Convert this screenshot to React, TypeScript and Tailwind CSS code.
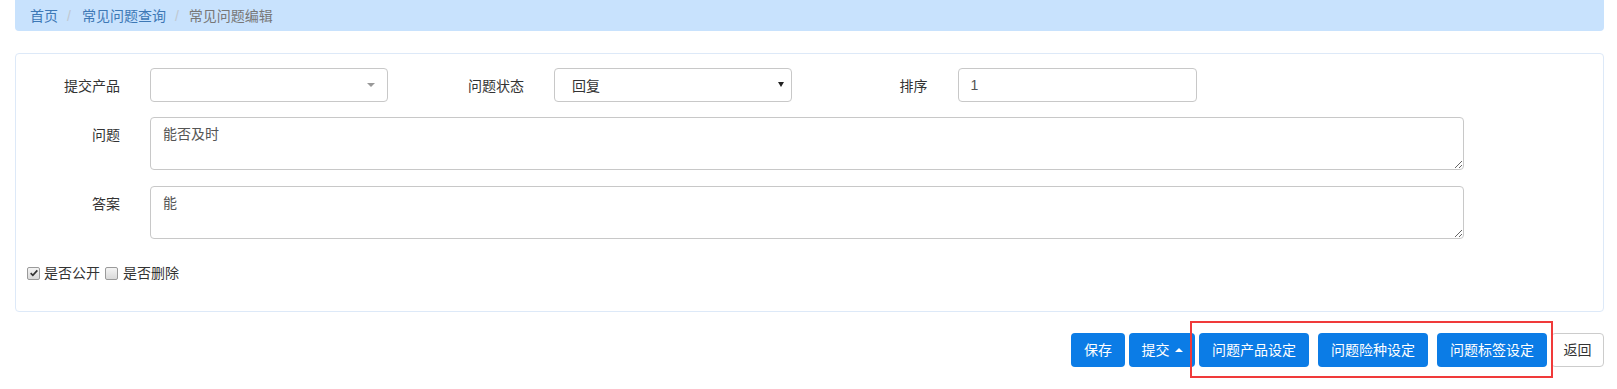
import React from "react";

const font = "font-['Liberation_Sans','Noto_Sans_CJK_SC',sans-serif]";

function Checkbox({ checked }: { checked?: boolean }) {
  return (
    <span className="flex h-[13px] w-[13px] items-center justify-center rounded-[2px] border border-[#9a9a9a] bg-gradient-to-b from-[#f4f4f4] to-[#dadada]">
      {checked && (
        <svg viewBox="0 0 12 12" className="h-[10px] w-[10px]">
          <path d="M2 6.2 L4.6 8.8 L10 2.8" fill="none" stroke="#333" strokeWidth="2" />
        </svg>
      )}
    </span>
  );
}

export default function App() {
  return (
    <div className={`h-[389px] w-full bg-white pl-[15px] pr-[13px] text-[14px] text-[#333] ${font}`}>
      {/* 面包屑 */}
      <div className="flex h-[31px] items-center rounded-b-[4px] bg-[#c8e2fd] pl-[15px] leading-[20px]">
        <span className="text-[#3d78b5]">首页</span>
        <span className="ml-[9px] mr-[11px] text-[#c0c8d0]">/</span>
        <span className="text-[#3d78b5]">常见问题查询</span>
        <span className="ml-[9px] mr-[10px] text-[#c0c8d0]">/</span>
        <span className="text-[#777]">常见问题编辑</span>
      </div>

      {/* 表单面板 */}
      <div className="mt-[22px] rounded-[4px] border border-[#dde9f8] pb-[28px] pt-[14px]">
        <div className="flex">
          <div className="flex w-[404px] items-start">
            <label className="w-[104px] pt-[8px] text-right leading-[20px]">提交产品</label>
            <div className="relative ml-[30px] h-[34px] w-[238px] rounded-[4px] border border-[#c8c8c8] bg-white">
              <span className="absolute right-[12px] top-[14px] h-0 w-0 border-x-[4px] border-t-[4px] border-x-transparent border-t-[#999]" />
            </div>
          </div>
          <div className="flex w-[403.5px] items-start">
            <label className="w-[104px] pt-[8px] text-right leading-[20px]">问题状态</label>
            <div className="relative ml-[30px] h-[34px] w-[238px]">
              <select
                defaultValue="回复"
                className="h-full w-full appearance-none rounded-[4px] border border-[#c8c8c8] bg-white pl-[17px] pt-[3px] text-[14px] text-[#333] outline-none"
              >
                <option>回复</option>
                <option>待回复</option>
              </select>
              <span className="pointer-events-none absolute right-[8px] top-[14px] h-0 w-0 border-x-[3px] border-t-[5px] border-x-transparent border-t-[#222]" />
            </div>
          </div>
          <div className="flex w-[404px] items-start">
            <label className="w-[104px] pt-[8px] text-right leading-[20px]">排序</label>
            <input
              defaultValue="1"
              className="ml-[30px] h-[34px] w-[239px] rounded-[4px] border border-[#c8c8c8] px-[12px] text-[14px] text-[#555] outline-none"
            />
          </div>
        </div>

        <div className="mt-[15px] flex items-start">
          <label className="w-[104px] pt-[8px] text-right leading-[20px]">问题</label>
          <textarea
            defaultValue="能否及时"
            className="ml-[30px] h-[53px] w-[1314px] rounded-[4px] border border-[#c8c8c8] px-[12px] py-[6px] text-[14px] leading-[20px] text-[#555] outline-none"
          />
        </div>

        <div className="mt-[16px] flex items-start">
          <label className="w-[104px] pt-[8px] text-right leading-[20px]">答案</label>
          <textarea
            defaultValue="能"
            className="ml-[30px] h-[53px] w-[1314px] rounded-[4px] border border-[#c8c8c8] px-[12px] py-[6px] text-[14px] leading-[20px] text-[#555] outline-none"
          />
        </div>

        <div className="mt-[24px] flex h-[20px] items-center pl-[11px] leading-[20px]">
          <Checkbox checked />
          <span className="ml-[4px]">是否公开</span>
          <span className="ml-[5px]">
            <Checkbox />
          </span>
          <span className="ml-[5px]">是否删除</span>
        </div>
      </div>

      {/* 按钮 */}
      <div className="relative mt-[21px] flex justify-end text-white">
        <button className="h-[34px] w-[54px] rounded-[4px] bg-[#0b7ce6]">保存</button>
        <button className="ml-[4px] flex h-[34px] w-[66px] items-center justify-center rounded-[4px] bg-[#0b7ce6]">
          提交
          <span className="ml-[5px] h-0 w-0 border-x-[4px] border-b-[4px] border-x-transparent border-b-white" />
        </button>
        <button className="ml-[4px] h-[34px] w-[110px] rounded-[4px] bg-[#0b7ce6]">问题产品设定</button>
        <button className="ml-[9px] h-[34px] w-[110px] rounded-[4px] bg-[#0b7ce6]">问题险种设定</button>
        <button className="ml-[9px] h-[34px] w-[110px] rounded-[4px] bg-[#0b7ce6]">问题标签设定</button>
        <button className="ml-[4px] h-[34px] w-[53px] rounded-[4px] border border-[#ccc] bg-white text-[#333]">返回</button>

        {/* 红框标注 */}
        <div className="pointer-events-none absolute left-[1175px] top-[-12px] h-[57px] w-[363px] border-2 border-[#f03a3a]" />
      </div>
    </div>
  );
}
